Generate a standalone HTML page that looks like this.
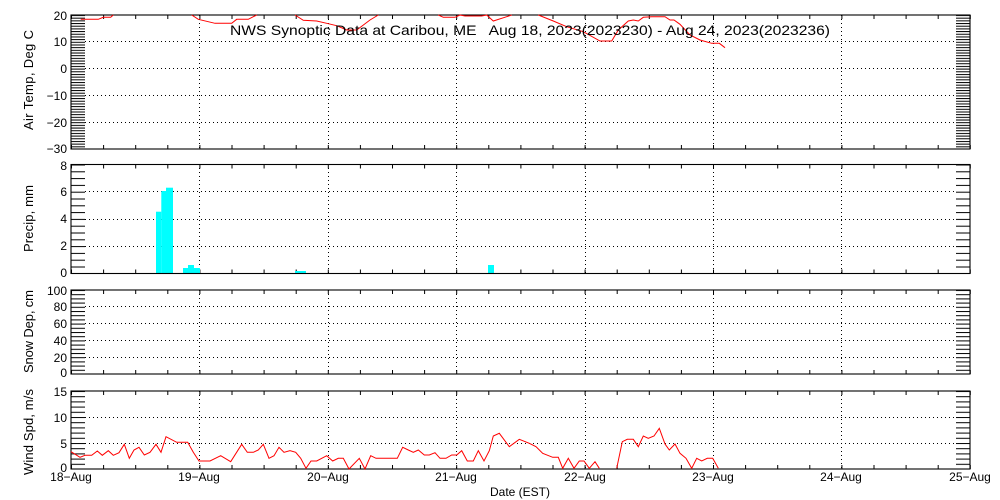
<!DOCTYPE html>
<html><head><meta charset="utf-8"><style>
html,body{margin:0;padding:0;background:#fff;}
svg{display:block;font-family:"Liberation Sans",sans-serif;}
</style></head><body>
<svg width="1000" height="500" viewBox="0 0 1000 500" xmlns="http://www.w3.org/2000/svg">
<defs>
<pattern id="p1" patternUnits="userSpaceOnUse" x="0" y="15" width="20" height="2.68"><rect x="0" y="0" width="20" height="1" fill="#000"/></pattern>
<pattern id="p2" patternUnits="userSpaceOnUse" x="0" y="164.5" width="20" height="6.8"><rect x="0" y="0" width="20" height="1" fill="#000"/></pattern>
<pattern id="p3" patternUnits="userSpaceOnUse" x="0" y="290" width="20" height="4.2"><rect x="0" y="0" width="20" height="1" fill="#000"/></pattern>
<pattern id="p4" patternUnits="userSpaceOnUse" x="0" y="391" width="20" height="5.2"><rect x="0" y="0" width="20" height="1" fill="#000"/></pattern>
<pattern id="vt" patternUnits="userSpaceOnUse" x="71" y="0" width="32.1" height="10"><rect x="0" y="0" width="1" height="10" fill="#000"/></pattern>
</defs>
<rect width="1000" height="500" fill="#fff"/>

<rect x="71" y="15" width="14" height="134" fill="url(#p1)"/>
<rect x="956" y="15" width="14" height="134" fill="url(#p1)"/>
<rect x="71" y="164.5" width="14" height="109" fill="url(#p2)"/>
<rect x="956" y="164.5" width="14" height="109" fill="url(#p2)"/>
<rect x="71" y="290" width="14" height="84" fill="url(#p3)"/>
<rect x="956" y="290" width="14" height="84" fill="url(#p3)"/>
<rect x="71" y="391" width="14" height="78" fill="url(#p4)"/>
<rect x="956" y="391" width="14" height="78" fill="url(#p4)"/>

<rect x="71" y="15" width="900" height="4" fill="url(#vt)"/>
<rect x="71" y="145" width="900" height="4" fill="url(#vt)"/>
<rect x="71" y="164.5" width="900" height="4" fill="url(#vt)"/>
<rect x="71" y="269.5" width="900" height="4" fill="url(#vt)"/>
<rect x="71" y="290" width="900" height="4" fill="url(#vt)"/>
<rect x="71" y="370" width="900" height="4" fill="url(#vt)"/>
<rect x="71" y="391" width="900" height="4" fill="url(#vt)"/>
<rect x="71" y="465" width="900" height="4" fill="url(#vt)"/>

<g stroke="#000" stroke-width="1" stroke-dasharray="1,3" fill="none">
<path d="M85 41.5H956M85 68.5H956M85 95.5H956M85 122.5H956"/>
<path d="M85 191.5H956M85 219.5H956M85 246.5H956"/>
<path d="M85 306.5H956M85 323.5H956M85 340.5H956M85 357.5H956"/>
<path d="M85 417.5H956M85 443.5H956"/>
<path d="M199.5 15V149M328.5 15V149M456.5 15V149M585.5 15V149M713.5 15V149M841.5 15V149"/>
<path d="M199.5 164V274M328.5 164V274M456.5 164V274M585.5 164V274M713.5 164V274M841.5 164V274"/>
<path d="M199.5 290V374M328.5 290V374M456.5 290V374M585.5 290V374M713.5 290V374M841.5 290V374"/>
<path d="M199.5 391V469M328.5 391V469M456.5 391V469M585.5 391V469M713.5 391V469M841.5 391V469"/>
</g>

<g fill="#00ffff">
<rect x="156" y="211.7" width="5.3" height="61.8"/>
<rect x="161.3" y="191" width="4.7" height="82.5"/>
<rect x="166" y="187.7" width="7" height="85.8"/>
<rect x="183" y="268" width="5" height="5.5"/>
<rect x="188" y="265" width="6" height="8.5"/>
<rect x="194" y="268" width="6" height="5.5"/>
<rect x="295" y="271" width="11" height="2.5"/>
<rect x="488" y="265" width="6" height="8.5"/>
</g>

<g stroke="#000" stroke-width="1.1" fill="none">
<rect x="71" y="15" width="899" height="134"/>
<rect x="71" y="164.5" width="899" height="109"/>
<rect x="71" y="290" width="899" height="84"/>
<rect x="71" y="391" width="899" height="78"/>
</g>

<g stroke="#ff0000" stroke-width="1" fill="none">
<polyline points="80.7,19.3 98.3,19.3 103.3,17.3 110.7,17.3 113.3,15"/>
<polyline points="191.7,15 198.3,19.3 215,23.3 231.7,23.3 236.7,19.3 248.3,19.3 256.7,15"/>
<polyline points="295,15 303.3,20.3 316.7,21 326.7,23.3 336.7,25.7 346.7,30 356.7,30 370,20 378.3,15"/>
<polyline points="438.3,15 443.3,17.3 455,17.3 460,15 465,16 481.7,16 486.7,15 493.3,21 506.7,16.7 511.7,15"/>
<polyline points="538.3,15 553.3,21 566.7,26.7 583.3,31.7 600,41 611.7,41 618.3,30 628.3,21 633.3,20 638.3,21 643.3,17.3 651.7,16.7 665,16.7 670,20 674,20 680,24.3 690,35 700,40 711.7,43.3 719.3,43.3 725,47.7"/>
</g>

<g stroke="#ff0000" stroke-width="1" fill="none">
<polyline points="71,451.7 80,457.3 85,455.3 91.7,455.3 97.3,451 102.3,455.3 108.3,450.7 113.3,455.3 119,452.7 124.3,444.3 129.3,458.3 134,450 139,447.3 144.3,455 150,452.3 156,444.3 161,452.3 166,436.7 176.7,442.3 187.7,442.3 193.3,452.3 199,461 210,461 220.7,455.7 230.7,461.7 241.7,444.3 247.3,452.3 253.3,452.3 258.3,450 263.3,444.3 269,458.3 274,455.7 279,447.3 284,452.3 290,450.7 295.7,452.3 300.7,458.3 306,468.3 311,461 316.7,461 326.7,455.7 332.7,461 338.3,458.3 343.3,458.3 349,469 359.3,458.3 365,469 370.7,455.7 376,458.3 397.3,458.3 402.7,447.3 408.3,450 413.3,452.3 418.3,450 424.3,455 429.3,455 435,452.7 440,458.3 446,458.3 451.7,455 456.7,455 461.7,450.7 467.3,461 473.3,461 478.3,450.7 484,461 489.3,450.7 493.3,436 499.3,433.3 509.3,446.7 519.3,439.3 529.3,443.3 536,446.7 542.7,453.3 552.7,457.3 558.3,457.3 562.7,468.3 568.3,458.3 574,468.3 579.3,461 584,461 589.3,468.3 595,461.7 599.3,468.3"/>
<polyline points="616.7,468.3 622.3,441.7 627.3,439.3 633.3,439.3 638.3,446.7 643.3,436 648.3,438.3 654,436 659.3,428.3 665,444 669.3,450 675,444 680,453.3 686,458.3 691.7,468.3 696.7,458.3 701.7,461 707.3,458.3 712.7,458.3 718.3,468.3"/>
</g>

<text x="230" y="35" font-size="14" textLength="600" lengthAdjust="spacingAndGlyphs" fill="#000" xml:space="preserve" style="white-space:pre">NWS Synoptic Data at Caribou, ME   Aug 18, 2023(2023230) - Aug 24, 2023(2023236)</text>

<g font-size="12" text-anchor="end" fill="#000">
<text x="67" y="20">20</text>
<text x="67" y="46">10</text>
<text x="67" y="73">0</text>
<text x="67" y="100">−10</text>
<text x="67" y="127">−20</text>
<text x="67" y="153">−30</text>
<text x="67" y="170">8</text>
<text x="67" y="196">6</text>
<text x="67" y="223">4</text>
<text x="67" y="250">2</text>
<text x="67" y="277">0</text>
<text x="67" y="295">100</text>
<text x="67" y="311">80</text>
<text x="67" y="328">60</text>
<text x="67" y="345">40</text>
<text x="67" y="362">20</text>
<text x="67" y="377">0</text>
<text x="67" y="396">15</text>
<text x="67" y="422">10</text>
<text x="67" y="448">5</text>
<text x="67" y="472">0</text>
</g>

<g font-size="13" fill="#000">
<text transform="translate(33,130) rotate(-90)" textLength="100" lengthAdjust="spacing">Air Temp, Deg C</text>
<text transform="translate(33,252) rotate(-90)" textLength="67" lengthAdjust="spacing">Precip, mm</text>
<text transform="translate(33,373) rotate(-90)" textLength="83" lengthAdjust="spacing">Snow Dep, cm</text>
<text transform="translate(33,475) rotate(-90)" textLength="86" lengthAdjust="spacing">Wind Spd, m/s</text>
</g>

<g font-size="12" text-anchor="middle" fill="#000">
<text x="71" y="481">18−Aug</text>
<text x="199" y="481">19−Aug</text>
<text x="328" y="481">20−Aug</text>
<text x="456" y="481">21−Aug</text>
<text x="585" y="481">22−Aug</text>
<text x="713" y="481">23−Aug</text>
<text x="841" y="481">24−Aug</text>
<text x="970" y="481">25−Aug</text>
<text x="520" y="496">Date (EST)</text>
</g>
</svg>
</body></html>
